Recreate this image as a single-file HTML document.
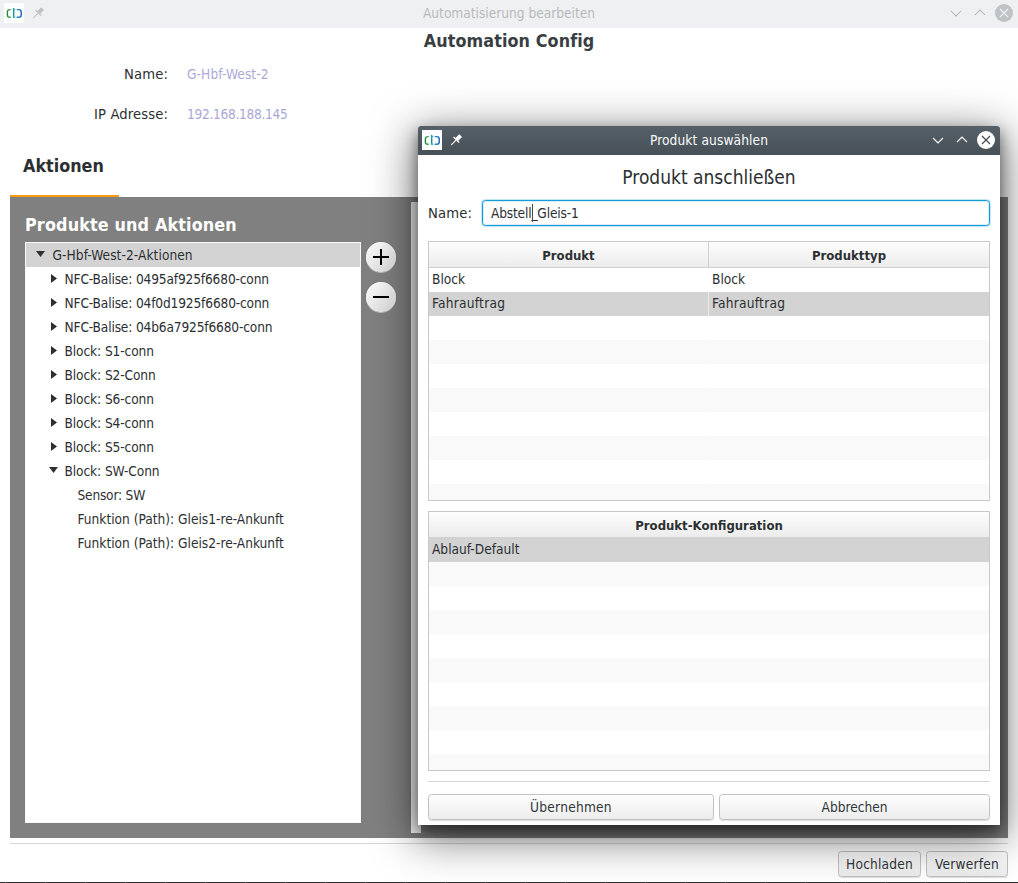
<!DOCTYPE html>
<html lang="de">
<head>
<meta charset="utf-8">
<title>Automatisierung bearbeiten</title>
<style>
*{box-sizing:border-box;margin:0;padding:0}
html,body{width:1018px;height:883px;overflow:hidden;background:#fff}
body{position:relative;font-family:"DejaVu Sans Condensed","Liberation Sans","DejaVu Sans",sans-serif;font-size:13.6px;color:#2c2f32}
.abs{position:absolute;white-space:nowrap}
/* main window */
#tb{left:0;top:0;width:1018px;height:28px;background:#eff0f1}
#tb .title{left:0;width:1018px;top:0;height:28px;line-height:27px;text-align:center;color:#b7babd;font-size:13.6px}
.ico{width:20px;height:20px;background:#fff}
h1{font-weight:bold}
#hdr{left:0;width:1018px;top:28px;height:26px;line-height:26px;text-align:center;font-size:17.8px;font-weight:bold;color:#393e43;letter-spacing:.1px}
.lbl{font-size:14.67px;letter-spacing:.12px;color:#2c2f32;text-align:right;width:168px;left:0}
.val{font-size:13.6px;color:#a9a9d8;left:187px}
#akt{left:23px;top:153px;font-size:17.8px;font-weight:bold;color:#2c2f32;line-height:26px}
#orange{left:10px;top:195px;width:109px;height:2px;background:#f39c12}
#panel{left:10px;top:197px;width:998px;height:641px;background:#808080}
#pa{left:25px;top:212px;letter-spacing:.15px;font-size:17.8px;font-weight:bold;color:#fff;line-height:26px}
#tree{left:25px;top:242px;width:336px;height:581px;background:#fff;border:1px solid #f8f8f8}
.row{left:0;width:334px;height:24px;line-height:24px;font-size:13.6px;color:#2c2f32}
.row.sel{background:#d3d3d3}
.row span{position:absolute;top:0}
.row svg{position:absolute}
.rb{left:366px;width:30px;height:30px;border-radius:15px;background:linear-gradient(160deg,#fbfbfb,#eeeeee 50%,#dddddd);box-shadow:0 1px 0 rgba(255,255,255,.55),0 0 1px rgba(0,0,0,.4),inset 0 0 0 1px rgba(255,255,255,.5)}
.rb i{position:absolute;background:#000}
#hline{left:10px;top:843px;width:998px;height:1px;background:#d6d6d6}
.btn{height:26px;border:1px solid #c0c1c2;border-radius:3.500px;background:linear-gradient(#fefefe,#ececec);text-align:center;line-height:24px;font-size:13.6px;color:#31363b;box-shadow:0 1px 0 rgba(0,0,0,.12)}
#taskbar{left:0;top:882px;width:1018px;height:1px;background:repeating-linear-gradient(90deg,#303030 0,#303030 39px,#5c5c5c 39px,#5c5c5c 40px);background-position:-34px 0}
/* dialog */
#dlg{left:418px;top:126px;width:582px;height:699px;background:#fff;border-radius:3px 3px 0 0;box-shadow:0 10px 44px 4px rgba(0,0,0,.55),0 6px 14px rgba(0,0,0,.45)}
#dtb{left:0;top:0;width:582px;height:29px;background:linear-gradient(#566068,#475057);border-radius:3px 3px 0 0}
#dtb .title{left:0;width:582px;top:0;height:29px;line-height:29px;text-align:center;color:#fcfcfc;font-size:13.6px}
#dh{left:0;width:582px;top:38px;height:26px;line-height:26px;text-align:center;font-size:19px;color:#2c2f32}
#dn{left:10px;top:74px;height:26px;line-height:26px;font-size:14.67px;letter-spacing:.12px}
#inp{left:64px;top:74px;width:508px;height:26px;border:1px solid #189bd9;border-radius:3.500px;background:#fff;line-height:24px;padding-left:8px;font-size:13.6px;letter-spacing:-.17px;box-shadow:0 0 0 1px rgba(61,174,233,.3),inset 0 0 0 1px rgba(61,174,233,.2)}
.tbl{left:10px;width:562px;height:260px;border:1px solid #c9c9c9;background:#fff;overflow:hidden}
.th{top:0;height:26px;line-height:28.500px;text-align:center;font-weight:bold;font-size:13px;background:linear-gradient(#fdfdfd,#ececec);border-bottom:1px solid #d0d0d0;color:#2c2f32}
.tr{left:0;width:560px;height:24px;line-height:22px;font-size:13.6px}
.tr.alt{background:#f9f9f9}
.tr.sel{background:#d3d3d3}
.tr span{position:absolute;top:0}
.vsep{left:279px;top:26px;width:1px;height:234px;background:rgba(255,255,255,.55)}
#dsep{left:10px;top:655px;width:562px;height:1px;background:#d4d4d4}
</style>
</head>
<body>
<!-- main window title bar -->
<div id="tb" class="abs">
  <div class="ico abs" style="left:4px;top:3px">
    <svg width="20" height="20" viewBox="0 0 20 20"><defs><linearGradient id="lgc" x1="0" x2="1" y1="0" y2="0"><stop offset="0" stop-color="#1f8d3d"/><stop offset=".55" stop-color="#3aa549"/><stop offset="1" stop-color="#9ad48f"/></linearGradient><linearGradient id="lgd" x1="0" x2="1" y1="0" y2="0"><stop offset="0" stop-color="#3db7e4"/><stop offset=".5" stop-color="#2a8fd0"/><stop offset="1" stop-color="#1a5fb0"/></linearGradient></defs><path d="M7.300 6.600H5.700a2.300 2.300 0 0 0-2.300 2.300v3.100a2.300 2.300 0 0 0 2.300 2.300H7.300" fill="none" stroke="url(#lgc)" stroke-width="1.400"/><path d="M9.700 4.900v9.800" fill="none" stroke="#13999c" stroke-width="1.400"/><path d="M9.700 6.600h1.500M12.600 6.600h2.300a2.300 2.300 0 0 1 2.300 2.300v3.100a2.300 2.300 0 0 1-2.300 2.300h-2.300M11.200 14.300H9.700" fill="none" stroke="url(#lgd)" stroke-width="1.400"/></svg>
  </div>
  <svg class="abs" style="left:30px;top:4px" width="18" height="18" viewBox="0 0 18 18"><g transform="translate(7.700 9.500) rotate(45)" fill="#bdc3c7"><rect x="-2" y="-7" width="4" height="5.800"/><rect x="-4" y="-1.600" width="8" height="1.300"/><rect x="-.55" y="-.5" width="1.100" height="6.700"/></g></svg>
  <div class="title abs">Automatisierung bearbeiten</div>
  <svg class="abs" style="left:947px;top:4px" width="70" height="20" viewBox="0 0 70 20"><path d="M4 7l5 5 5-5M28 11l5-5 5 5" fill="none" stroke="#aeb3b7" stroke-width="1.050"/><circle cx="57" cy="9" r="9" fill="#bdc3c7"/><path d="M53 5l8 8M61 5l-8 8" stroke="#eff0f1" stroke-width="1.200"/></svg>
</div>
<div id="hdr" class="abs">Automation Config</div>
<div class="lbl abs" style="top:64px;line-height:20px">Name:</div>
<div class="val abs" style="top:64px;line-height:20px;letter-spacing:.1px">G-Hbf-West-2</div>
<div class="lbl abs" style="top:104px;line-height:20px">IP Adresse:</div>
<div class="val abs" style="top:104px;line-height:20px;letter-spacing:-.3px">192.168.188.145</div>
<div id="akt" class="abs">Aktionen</div>
<div id="orange" class="abs"></div>
<div id="panel" class="abs"></div>
<div id="pa" class="abs">Produkte und Aktionen</div>
<div id="tree" class="abs">
  <div class="row sel abs" style="top:0"><svg style="left:9.500px;top:8.300px" width="9" height="6"><path d="M0 0h9L4.500 6z" fill="#303030"/></svg><span style="left:26.500px;letter-spacing:.07px">G-Hbf-West-2-Aktionen</span></div>
  <div class="row abs" style="top:24px"><svg style="left:24.600px;top:7.300px" width="6" height="9"><path d="M0 0v9l6-4.500z" fill="#303030"/></svg><span style="left:38.500px;letter-spacing:-.15px">NFC-Balise: 0495af925f6680-conn</span></div>
  <div class="row abs" style="top:48px"><svg style="left:24.600px;top:7.300px" width="6" height="9"><path d="M0 0v9l6-4.500z" fill="#303030"/></svg><span style="left:38.500px;letter-spacing:-.15px">NFC-Balise: 04f0d1925f6680-conn</span></div>
  <div class="row abs" style="top:72px"><svg style="left:24.600px;top:7.300px" width="6" height="9"><path d="M0 0v9l6-4.500z" fill="#303030"/></svg><span style="left:38.500px;letter-spacing:-.15px">NFC-Balise: 04b6a7925f6680-conn</span></div>
  <div class="row abs" style="top:96px"><svg style="left:24.600px;top:7.300px" width="6" height="9"><path d="M0 0v9l6-4.500z" fill="#303030"/></svg><span style="left:38.500px;letter-spacing:-.1px">Block: S1-conn</span></div>
  <div class="row abs" style="top:120px"><svg style="left:24.600px;top:7.300px" width="6" height="9"><path d="M0 0v9l6-4.500z" fill="#303030"/></svg><span style="left:38.500px;letter-spacing:-.1px">Block: S2-Conn</span></div>
  <div class="row abs" style="top:144px"><svg style="left:24.600px;top:7.300px" width="6" height="9"><path d="M0 0v9l6-4.500z" fill="#303030"/></svg><span style="left:38.500px;letter-spacing:-.1px">Block: S6-conn</span></div>
  <div class="row abs" style="top:168px"><svg style="left:24.600px;top:7.300px" width="6" height="9"><path d="M0 0v9l6-4.500z" fill="#303030"/></svg><span style="left:38.500px;letter-spacing:-.1px">Block: S4-conn</span></div>
  <div class="row abs" style="top:192px"><svg style="left:24.600px;top:7.300px" width="6" height="9"><path d="M0 0v9l6-4.500z" fill="#303030"/></svg><span style="left:38.500px;letter-spacing:-.1px">Block: S5-conn</span></div>
  <div class="row abs" style="top:216px"><svg style="left:22.700px;top:8.300px" width="9" height="6"><path d="M0 0h9L4.500 6z" fill="#303030"/></svg><span style="left:38.500px;letter-spacing:-.1px">Block: SW-Conn</span></div>
  <div class="row abs" style="top:240px"><span style="left:51.500px;letter-spacing:-.2px">Sensor: SW</span></div>
  <div class="row abs" style="top:264px"><span style="left:51.500px">Funktion (Path): Gleis1-re-Ankunft</span></div>
  <div class="row abs" style="top:288px"><span style="left:51.500px">Funktion (Path): Gleis2-re-Ankunft</span></div>
</div>
<div class="rb abs" style="top:242px"><i style="left:7px;top:14px;width:16px;height:2px"></i><i style="left:14px;top:7px;width:2px;height:16px"></i></div>
<div class="rb abs" style="top:282px"><i style="left:7px;top:14px;width:16px;height:2px"></i></div>
<div class="abs" style="left:411px;top:202px;width:10px;height:631px;background:#fcfcfc"></div>
<div id="hline" class="abs"></div>
<div class="btn abs" style="left:838px;top:851px;width:83px;letter-spacing:.2px">Hochladen</div>
<div class="btn abs" style="left:926px;top:851px;width:82px;letter-spacing:.2px">Verwerfen</div>
<div id="taskbar" class="abs"></div>

<!-- dialog -->
<div id="dlg" class="abs">
  <div id="dtb" class="abs">
    <div class="ico abs" style="left:4px;top:4px">
      <svg width="20" height="20" viewBox="0 0 20 20"><path d="M7.300 6.600H5.700a2.300 2.300 0 0 0-2.300 2.300v3.100a2.300 2.300 0 0 0 2.300 2.300H7.300" fill="none" stroke="url(#lgc)" stroke-width="1.400"/><path d="M9.700 4.900v9.800" fill="none" stroke="#13999c" stroke-width="1.400"/><path d="M9.700 6.600h1.500M12.600 6.600h2.300a2.300 2.300 0 0 1 2.300 2.300v3.100a2.300 2.300 0 0 1-2.300 2.300h-2.300M11.200 14.300H9.700" fill="none" stroke="url(#lgd)" stroke-width="1.400"/></svg>
    </div>
    <svg class="abs" style="left:30px;top:5px" width="18" height="18" viewBox="0 0 18 18"><g transform="translate(7.700 9.500) rotate(45)" fill="#fcfcfc"><rect x="-2" y="-7" width="4" height="5.800"/><rect x="-4" y="-1.600" width="8" height="1.300"/><rect x="-.55" y="-.5" width="1.100" height="6.700"/></g></svg>
    <div class="title abs" style="letter-spacing:.12px">Produkt auswählen</div>
    <svg class="abs" style="left:511px;top:5px" width="70" height="20" viewBox="0 0 70 20"><path d="M4 7l5 5 5-5M28 11l5-5 5 5" fill="none" stroke="#fcfcfc" stroke-width="1.200"/><circle cx="57" cy="9" r="9" fill="#fcfcfc"/><path d="M53 5l8 8M61 5l-8 8" stroke="#475057" stroke-width="1.200"/></svg>
  </div>
  <div id="dh" class="abs">Produkt anschließen</div>
  <div id="dn" class="abs">Name:</div>
  <div id="inp" class="abs">Abstell_Gleis-1<i class="abs" style="left:49px;top:3px;width:1px;height:18px;background:#4d4d4d"></i></div>
  <div class="tbl abs" style="top:115px">
    <div class="th abs" style="left:0;width:280px;border-right:1px solid #d0d0d0">Produkt</div>
    <div class="th abs" style="left:280px;width:280px">Produkttyp</div>
    <div class="tr abs" style="top:26px"><span style="left:3px">Block</span><span style="left:283px">Block</span></div>
    <div class="tr sel abs" style="top:50px"><span style="left:3px;letter-spacing:.25px">Fahrauftrag</span><span style="left:283px;letter-spacing:.25px">Fahrauftrag</span></div>
    <div class="tr abs" style="top:74px"></div>
    <div class="tr alt abs" style="top:98px"></div>
    <div class="tr abs" style="top:122px"></div>
    <div class="tr alt abs" style="top:146px"></div>
    <div class="tr abs" style="top:170px"></div>
    <div class="tr alt abs" style="top:194px"></div>
    <div class="tr abs" style="top:218px"></div>
    <div class="tr alt abs" style="top:242px"></div>
    <div class="vsep abs"></div>
  </div>
  <div class="tbl abs" style="top:385px">
    <div class="th abs" style="left:0;width:560px">Produkt-Konfiguration</div>
    <div class="tr sel abs" style="top:26px"><span style="left:3px">Ablauf-Default</span></div>
    <div class="tr alt abs" style="top:50px"></div>
    <div class="tr abs" style="top:74px"></div>
    <div class="tr alt abs" style="top:98px"></div>
    <div class="tr abs" style="top:122px"></div>
    <div class="tr alt abs" style="top:146px"></div>
    <div class="tr abs" style="top:170px"></div>
    <div class="tr alt abs" style="top:194px"></div>
    <div class="tr abs" style="top:218px"></div>
    <div class="tr alt abs" style="top:242px"></div>
  </div>
  <div id="dsep" class="abs"></div>
  <div class="btn abs" style="left:10px;top:668px;width:286px;letter-spacing:.25px">Übernehmen</div>
  <div class="btn abs" style="left:301px;top:668px;width:271px">Abbrechen</div>
</div>
</body>
</html>
